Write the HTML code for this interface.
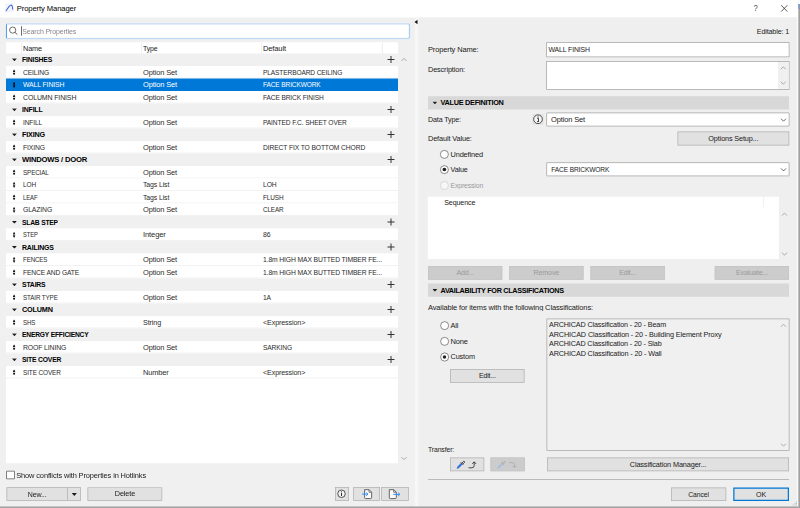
<!DOCTYPE html>
<html><head><meta charset="utf-8"><title>Property Manager</title>
<style>
*{box-sizing:border-box;margin:0;padding:0}
html,body{width:800px;height:508px;overflow:hidden;background:#f0f0f0}
#root{position:absolute;left:0;top:0;width:3200px;height:2032px;overflow:hidden;transform-origin:0 0;transform:scale(0.25);font-family:"Liberation Sans",sans-serif;font-size:30px;color:#1a1a1a;line-height:1;letter-spacing:-0.52px}
.a{position:absolute}
.t{position:absolute;white-space:nowrap;line-height:40px;height:40px;margin-top:-2.2px}
.w{display:inline-block;transform-origin:0 50%}
.btn .w{transform-origin:50% 50%}
.btn .t{margin-top:0}
.w.wr{transform-origin:100% 50%}
.u{letter-spacing:0;display:inline-block;transform:scaleX(.89);transform-origin:0 50%}
.row .c3.u{transform:scaleX(.855)}
#title{left:0;top:0;width:3192.8px;height:70.4px;background:#fff}
#list{left:24px;top:170px;width:1568px;height:1682.8px;background:#fff}
.row{position:absolute;left:24px;width:1568px;height:50px}
.row.g{background:#f0f0f0}
.row.it{background:#fff;color:#2b2b2b;border-bottom:4px solid #f2f2f2}
.row.sel{background:#0078d7;color:#fff;border-bottom:none}
.row span,.row b{position:absolute;top:0.2px;line-height:50px;white-space:nowrap;transform-origin:0 50%}
.row b{letter-spacing:-0.8px;font-size:29.2px;color:#000;margin-top:-0.4px}
.c1{left:64.4px}.c2{left:548px}.c3{left:1028px}
.it .c1{left:68.4px}
.tri{position:absolute;left:23.2px;top:19.2px;width:20.8px;height:11.6px;background:#1c1c1c;clip-path:polygon(0 0,100% 0,50% 100%)}
.ud{position:absolute;left:26.4px;top:13.2px;width:12px;height:24.8px;background:#1c1c1c;clip-path:polygon(50% 0,100% 43%,0 43%,50% 0,50% 100%,0 57%,100% 57%,50% 100%)}
.sel .ud{background:#000}
.plus{left:1525.6px;top:10.4px !important;width:28px;height:28px}
.plus:before{content:"";position:absolute;left:12px;top:0;width:4px;height:28px;background:#333}
.plus:after{content:"";position:absolute;left:0;top:12px;width:28px;height:4px;background:#333}
.btn{position:absolute;background:#e1e1e1;border:3.2px solid #b2b2b2;text-align:center;white-space:nowrap}
.btn.dis{background:#cccccc;border-color:#c4c4c4;color:#9a9a9a}
.inp{position:absolute;background:#fff;border:3.2px solid #a3a3a3}
.bar{position:absolute;left:1712px;width:1444px;height:52.8px;background:#d8d8d8}
.bar b{position:absolute;left:50px;top:0;line-height:52px;font-size:28.8px;letter-spacing:-1.2px;color:#000;white-space:nowrap}
.bar .tri{left:17.2px;top:20.8px}
.radio{position:absolute;width:35.2px;height:35.2px;border-radius:50%;border:3px solid #666;background:#fff}
.radio.on:after{content:"";position:absolute;left:7.2px;top:7.2px;width:14.4px;height:14.4px;border-radius:50%;background:#222}
.radio.dis{border-color:#cdcdcd;background:#f7f7f7}
svg{position:absolute;overflow:visible}
</style></head><body><div id="root">
<div class="a" id="title"></div>
<svg style="left:0;top:0" width="80" height="68" viewBox="0 0 20 17"><rect x="5.3" y="3.6" width="8.4" height="8.6" rx="0.8" fill="#f2f4fa"/><path d="M6.1 10.7 L9.1 6.4 C10.1 5 11.5 4.7 12.1 5.9 C12.5 6.8 12.6 8 12.7 9.2" fill="none" stroke="#4668dc" stroke-width="1.05" stroke-linecap="round"/></svg>
<div class="t" style="left:67.2px;top:16.4px;font-size:30.8px;color:#000"><span class="w" style="transform:scaleX(0.997)">Property Manager</span></div>
<div class="t" style="left:3012.8px;top:14.4px;font-size:36px;color:#4a4a4a;transform:scaleX(.85)">?</div>
<svg style="left:3120px;top:18px" width="32" height="32" viewBox="0 0 8 8"><path d="M1.2 0.7 L7.4 7.1 M7.4 0.7 L1.2 7.1" stroke="#333" stroke-width="0.8" fill="none"/></svg>

<!-- search -->
<div class="a" style="left:24px;top:93.6px;width:1614.8px;height:61.6px;background:#fff;border:4.8px solid #86b9ec;border-left-color:#5a9fe6;border-right-color:#5a9fe6;border-radius:4.8px;box-shadow:0 0 0 2px #d5e6f7"></div>
<svg style="left:32px;top:100px" width="44" height="44" viewBox="0 0 11 11"><circle cx="4.7" cy="5.1" r="3.1" fill="none" stroke="#4a4a4a" stroke-width="0.8"/><path d="M6.9 7.3 L9.3 9.6" stroke="#4a4a4a" stroke-width="0.9"/></svg>
<div class="a" style="left:84.8px;top:104.8px;width:3.2px;height:38.4px;background:#3a3a3a"></div>
<div class="t" style="left:89.2px;top:107.6px;font-size:28.8px;color:#85858f"><span class="w" style="transform:scaleX(0.971)">Search Properties</span></div>

<!-- list -->
<div class="a" id="list"></div>
<div class="a" style="left:24px;top:170px;width:1568px;height:45.2px;background:#fff"></div>
<div class="a" style="left:85.2px;top:170px;width:2.8px;height:45.2px;background:#ececec"></div>
<div class="a" style="left:565.2px;top:170px;width:2.8px;height:45.2px;background:#ececec"></div>
<div class="a" style="left:1045.2px;top:170px;width:2.8px;height:45.2px;background:#ececec"></div>
<div class="a" style="left:1527.2px;top:170px;width:4.8px;height:45.2px;background:#f0f0f0"></div>
<div class="t" style="left:92px;top:174.8px"><span class="w" style="transform:scaleX(0.974)">Name</span></div>
<div class="t" style="left:572px;top:174.8px"><span class="w" style="transform:scaleX(0.921)">Type</span></div>
<div class="t" style="left:1052px;top:174.8px"><span class="w" style="transform:scaleX(1.002)">Default</span></div>
<div class="row g" style="top:214px"><i class="tri"></i><b class="c1" style="transform:scaleX(0.936)">FINISHES</b><span class="plus"></span></div>
<div class="row it" style="top:264px"><i class="ud"></i><span class="c1" style="transform:scaleX(0.893)">CEILING</span><span class="c2" style="transform:scaleX(0.996)">Option Set</span><span class="c3" style="transform:scaleX(0.876)">PLASTERBOARD CEILING</span></div>
<div class="row it sel" style="top:314px"><i class="ud"></i><span class="c1" style="transform:scaleX(0.916)">WALL FINISH</span><span class="c2" style="transform:scaleX(0.996)">Option Set</span><span class="c3" style="transform:scaleX(0.871)">FACE BRICKWORK</span></div>
<div class="row it" style="top:364px"><i class="ud"></i><span class="c1" style="transform:scaleX(0.927)">COLUMN FINISH</span><span class="c2" style="transform:scaleX(0.996)">Option Set</span><span class="c3" style="transform:scaleX(0.877)">FACE BRICK FINISH</span></div>
<div class="row g" style="top:414px"><i class="tri"></i><b class="c1" style="transform:scaleX(0.953)">INFILL</b><span class="plus"></span></div>
<div class="row it" style="top:464px"><i class="ud"></i><span class="c1" style="transform:scaleX(0.879)">INFILL</span><span class="c2" style="transform:scaleX(0.996)">Option Set</span><span class="c3" style="transform:scaleX(0.884)">PAINTED F.C. SHEET OVER</span></div>
<div class="row g" style="top:514px"><i class="tri"></i><b class="c1" style="transform:scaleX(0.990)">FIXING</b><span class="plus"></span></div>
<div class="row it" style="top:564px"><i class="ud"></i><span class="c1" style="transform:scaleX(0.904)">FIXING</span><span class="c2" style="transform:scaleX(0.996)">Option Set</span><span class="c3" style="transform:scaleX(0.896)">DIRECT FIX TO BOTTOM CHORD</span></div>
<div class="row g" style="top:614px"><i class="tri"></i><b class="c1" style="transform:scaleX(1.047)">WINDOWS / DOOR</b><span class="plus"></span></div>
<div class="row it" style="top:664px"><i class="ud"></i><span class="c1" style="transform:scaleX(0.835)">SPECIAL</span><span class="c2" style="transform:scaleX(0.996)">Option Set</span></div>
<div class="row it" style="top:714px"><i class="ud"></i><span class="c1" style="transform:scaleX(0.865)">LOH</span><span class="c2" style="transform:scaleX(0.923)">Tags List</span><span class="c3" style="transform:scaleX(0.898)">LOH</span></div>
<div class="row it" style="top:764px"><i class="ud"></i><span class="c1" style="transform:scaleX(0.795)">LEAF</span><span class="c2" style="transform:scaleX(0.923)">Tags List</span><span class="c3" style="transform:scaleX(0.856)">FLUSH</span></div>
<div class="row it" style="top:814px"><i class="ud"></i><span class="c1" style="transform:scaleX(0.909)">GLAZING</span><span class="c2" style="transform:scaleX(0.996)">Option Set</span><span class="c3" style="transform:scaleX(0.842)">CLEAR</span></div>
<div class="row g" style="top:864px"><i class="tri"></i><b class="c1" style="transform:scaleX(0.917)">SLAB STEP</b><span class="plus"></span></div>
<div class="row it" style="top:914px"><i class="ud"></i><span class="c1" style="transform:scaleX(0.771)">STEP</span><span class="c2" style="transform:scaleX(1.013)">Integer</span><span class="c3" style="transform:scaleX(0.914)">86</span></div>
<div class="row g" style="top:964px"><i class="tri"></i><b class="c1" style="transform:scaleX(0.953)">RAILINGS</b><span class="plus"></span></div>
<div class="row it" style="top:1014px"><i class="ud"></i><span class="c1" style="transform:scaleX(0.819)">FENCES</span><span class="c2" style="transform:scaleX(0.996)">Option Set</span><span class="c3" style="transform:scaleX(0.902)">1.8m HIGH MAX BUTTED TIMBER FE...</span></div>
<div class="row it" style="top:1064px"><i class="ud"></i><span class="c1" style="transform:scaleX(0.891)">FENCE AND GATE</span><span class="c2" style="transform:scaleX(0.996)">Option Set</span><span class="c3" style="transform:scaleX(0.902)">1.8m HIGH MAX BUTTED TIMBER FE...</span></div>
<div class="row g" style="top:1114px"><i class="tri"></i><b class="c1" style="transform:scaleX(0.939)">STAIRS</b><span class="plus"></span></div>
<div class="row it" style="top:1164px"><i class="ud"></i><span class="c1" style="transform:scaleX(0.831)">STAIR TYPE</span><span class="c2" style="transform:scaleX(0.996)">Option Set</span><span class="c3" style="transform:scaleX(0.897)">1A</span></div>
<div class="row g" style="top:1214px"><i class="tri"></i><b class="c1" style="transform:scaleX(0.996)">COLUMN</b><span class="plus"></span></div>
<div class="row it" style="top:1264px"><i class="ud"></i><span class="c1" style="transform:scaleX(0.812)">SHS</span><span class="c2" style="transform:scaleX(0.957)">String</span><span class="c3" style="transform:scaleX(0.952)">&lt;Expression&gt;</span></div>
<div class="row g" style="top:1314px"><i class="tri"></i><b class="c1" style="transform:scaleX(0.915)">ENERGY EFFICIENCY</b><span class="plus"></span></div>
<div class="row it" style="top:1364px"><i class="ud"></i><span class="c1" style="transform:scaleX(0.913)">ROOF LINING</span><span class="c2" style="transform:scaleX(0.996)">Option Set</span><span class="c3" style="transform:scaleX(0.883)">SARKING</span></div>
<div class="row g" style="top:1414px"><i class="tri"></i><b class="c1" style="transform:scaleX(0.929)">SITE COVER</b><span class="plus"></span></div>
<div class="row it" style="top:1464px"><i class="ud"></i><span class="c1" style="transform:scaleX(0.857)">SITE COVER</span><span class="c2" style="transform:scaleX(0.992)">Number</span><span class="c3" style="transform:scaleX(0.952)">&lt;Expression&gt;</span></div>
<!-- list scrollbar -->
<svg style="left:1602px;top:228px" width="28" height="20" viewBox="0 0 7 5"><path d="M0.9 4 L3.5 1.3 L6.1 4" fill="none" stroke="#a3a3a3" stroke-width="0.9"/></svg>
<svg style="left:1602px;top:1824.4px" width="28" height="20" viewBox="0 0 7 5"><path d="M0.9 1 L3.5 3.7 L6.1 1" fill="none" stroke="#a3a3a3" stroke-width="0.9"/></svg>

<!-- bottom-left -->
<div class="a" style="left:25.2px;top:1882.8px;width:34px;height:34.4px;background:#fff;border:3px solid #5a5a5a;border-radius:2.8px"></div>
<div class="t" style="left:65.2px;top:1883.6px"><span class="w" style="transform:scaleX(0.992)">Show conflicts with Properties in Hotlinks</span></div>
<div class="btn" style="left:26px;top:1949.2px;width:298px;height:54px"></div>
<div class="a" style="left:269.2px;top:1953.2px;width:2.8px;height:46px;background:#adadad"></div>
<div class="t" style="left:29.2px;top:1958.4px;width:244px;text-align:center"><span class="w" style="transform:scaleX(0.932)">New...</span></div>
<i class="tri" style="left:286.8px;top:1972px"></i>
<div class="btn" style="left:350px;top:1949.2px;width:298.8px;height:54px"><div class="t" style="left:0;right:0;top:2.8px"><span class="w" style="transform:scaleX(0.971)">Delete</span></div></div>
<div class="btn" style="left:1340.4px;top:1948.4px;width:55.2px;height:54.8px"></div>
<svg style="left:1346.4px;top:1954.8px" width="40" height="40" viewBox="0 0 10 10"><circle cx="5" cy="5" r="3.75" fill="#f4f4f4" stroke="#3a3a3a" stroke-width="0.85"/><rect x="4.5" y="4.3" width="1" height="2.9" fill="#2a2a2a"/><rect x="4.5" y="2.6" width="1" height="1" fill="#2a2a2a"/></svg>
<div class="btn" style="left:1412.8px;top:1948.4px;width:106.8px;height:54.8px"></div>
<svg style="left:1440px;top:1952px" width="56" height="48" viewBox="0 0 14 12"><path d="M4.6 1.7 H9.1 L11.6 4.2 V9.6 Q11.6 10.6 10.6 10.6 H5.6 Q4.6 10.6 4.6 9.6 Z" fill="#fafafa" stroke="#4a4a4a" stroke-width="0.85" stroke-linejoin="round"/><path d="M9 1.9 V4.3 H11.4" fill="none" stroke="#4a4a4a" stroke-width="0.7"/><path d="M2 6.1 H8 M6.2 4.4 L8 6.1 L6.2 7.8" fill="none" stroke="#2f8cf0" stroke-width="0.95"/></svg>
<div class="btn" style="left:1524.8px;top:1948.4px;width:110.4px;height:54.8px"></div>
<svg style="left:1548px;top:1952px" width="60" height="48" viewBox="0 0 15 12"><path d="M2.3 1.7 H6.8 L9.3 4.2 V9.6 Q9.3 10.6 8.3 10.6 H3.3 Q2.3 10.6 2.3 9.6 Z" fill="#fafafa" stroke="#4a4a4a" stroke-width="0.85" stroke-linejoin="round"/><path d="M6.7 1.9 V4.3 H9.1" fill="none" stroke="#4a4a4a" stroke-width="0.7"/><path d="M6.2 6.4 H12.9 M11.1 4.7 L12.9 6.4 L11.1 8.1" fill="none" stroke="#2f8cf0" stroke-width="0.95"/></svg>

<!-- splitter -->
<div class="a" style="left:1660px;top:70px;width:14.4px;height:1956px;background:#f7f7f7"></div>
<div class="a" style="left:1674.4px;top:70px;width:1512.8px;height:1956px;background:#efefef"></div>
<div class="a" style="left:3187.2px;top:70px;width:5.6px;height:1956px;background:#f8f8f8"></div>
<div class="a" style="left:1658.4px;top:79.2px;width:0;height:0;border-top:9.6px solid transparent;border-bottom:9.6px solid transparent;border-right:12px solid #111"></div>

<!-- right panel -->
<div class="t" style="left:2756px;width:400px;text-align:right;top:108.8px"><span class="w wr" style="transform:scaleX(0.948)">Editable: 1</span></div>
<div class="t" style="left:1712px;top:180.8px"><span class="w" style="transform:scaleX(0.996)">Property Name:</span></div>
<div class="inp" style="left:2184.8px;top:168.8px;width:973.6px;height:60px"></div>
<div class="t" style="left:2194.4px;top:180.8px"><span class="w" style="transform:scaleX(0.918)">WALL FINISH</span></div>
<div class="t" style="left:1712px;top:259.2px"><span class="w" style="transform:scaleX(0.972)">Description:</span></div>
<div class="inp" style="left:2184.8px;top:244.4px;width:973.6px;height:114.4px"></div>
<div class="a" style="left:3112px;top:248px;width:42px;height:106.8px;background:#f0f0f0"></div>
<svg style="left:3121.2px;top:264px" width="24" height="16" viewBox="0 0 6 4"><path d="M0.5 3.3 L3 0.8 L5.5 3.3" fill="none" stroke="#a3a3a3" stroke-width="0.9"/></svg>
<svg style="left:3121.2px;top:324px" width="24" height="16" viewBox="0 0 6 4"><path d="M0.5 0.7 L3 3.2 L5.5 0.7" fill="none" stroke="#a3a3a3" stroke-width="0.9"/></svg>

<div class="bar" style="top:384.8px"><i class="tri"></i><b><span class="w" style="transform:scaleX(1.020)">VALUE DEFINITION</span></b></div>
<div class="t" style="left:1712px;top:461.2px"><span class="w" style="transform:scaleX(0.944)">Data Type:</span></div>
<div class="a" style="left:2129.6px;top:455.6px;width:44px;height:42.4px;background:#e2e2e2"></div>
<svg style="left:2132px;top:457.2px" width="40" height="40" viewBox="0 0 10 10"><circle cx="5" cy="5" r="4.35" fill="#f6f6f6" stroke="#3c3c3c" stroke-width="0.9"/><path d="M4.2 4.2 H5.5 V7.3 M4.1 7.3 H5.9" fill="none" stroke="#2a2a2a" stroke-width="0.9"/><rect x="4.5" y="2.2" width="1.1" height="1.1" fill="#2a2a2a"/></svg>
<div class="inp" style="left:2185.2px;top:450.4px;width:973.2px;height:55.2px;border-radius:3.2px"></div>
<div class="t" style="left:2204px;top:459.2px"><span class="w" style="transform:scaleX(0.996)">Option Set</span></div>
<svg style="left:3122.4px;top:472px" width="24" height="16" viewBox="0 0 6 4"><path d="M0.5 0.7 L3 3.2 L5.5 0.7" fill="none" stroke="#444" stroke-width="0.8"/></svg>

<div class="t" style="left:1712px;top:537.2px"><span class="w" style="transform:scaleX(0.978)">Default Value:</span></div>
<div class="btn" style="left:2710px;top:526.4px;width:447.2px;height:55.6px"><div class="t" style="left:0;right:0;top:3.6px"><span class="w" style="transform:scaleX(0.967)">Options Setup...</span></div></div>

<div class="radio" style="left:1760px;top:600px"></div>
<div class="t" style="left:1802.4px;top:598.4px"><span class="w" style="transform:scaleX(0.981)">Undefined</span></div>
<div class="radio on" style="left:1760px;top:660.8px"></div>
<div class="t" style="left:1802.4px;top:659.6px"><span class="w" style="transform:scaleX(0.956)">Value</span></div>
<div class="inp" style="left:2185.2px;top:648.8px;width:973.2px;height:56.4px;border-radius:3.2px"></div>
<div class="t" style="left:2205.2px;top:658.8px"><span class="w" style="transform:scaleX(0.877)">FACE BRICKWORK</span></div>
<svg style="left:3122.4px;top:671.2px" width="24" height="16" viewBox="0 0 6 4"><path d="M0.5 0.7 L3 3.2 L5.5 0.7" fill="none" stroke="#444" stroke-width="0.8"/></svg>
<div class="radio dis" style="left:1760px;top:724.4px"></div>
<div class="t" style="left:1802.4px;top:722px;color:#9a9a9a"><span class="w" style="transform:scaleX(0.910)">Expression</span></div>

<div class="a" style="left:1710.8px;top:786.8px;width:1405.2px;height:248.8px;background:#fff"></div>
<div class="a" style="left:3053.2px;top:785.2px;width:2.8px;height:44px;background:#ececec"></div>
<div class="t" style="left:1777.2px;top:792px"><span class="w" style="transform:scaleX(0.947)">Sequence</span></div>
<svg style="left:3125.6px;top:848.8px" width="24" height="16" viewBox="0 0 6 4"><path d="M0.5 3.3 L3 0.8 L5.5 3.3" fill="none" stroke="#a3a3a3" stroke-width="0.9"/></svg>
<svg style="left:3125.6px;top:1008px" width="24" height="16" viewBox="0 0 6 4"><path d="M0.5 0.7 L3 3.2 L5.5 0.7" fill="none" stroke="#a3a3a3" stroke-width="0.9"/></svg>

<div class="btn dis" style="left:1712px;top:1064px;width:297.2px;height:54.8px"><div class="t" style="left:0;right:0;top:3.6px"><span class="w" style="transform:scaleX(0.929)">Add...</span></div></div>
<div class="btn dis" style="left:2037.2px;top:1064px;width:297.2px;height:54.8px"><div class="t" style="left:0;right:0;top:3.6px"><span class="w" style="transform:scaleX(0.939)">Remove</span></div></div>
<div class="btn dis" style="left:2362px;top:1064px;width:297.2px;height:54.8px"><div class="t" style="left:0;right:0;top:3.6px"><span class="w" style="transform:scaleX(0.931)">Edit...</span></div></div>
<div class="btn dis" style="left:2859.2px;top:1064px;width:297.2px;height:54.8px"><div class="t" style="left:0;right:0;top:3.6px"><span class="w" style="transform:scaleX(0.941)">Evaluate...</span></div></div>

<div class="bar" style="top:1134.4px"><i class="tri"></i><b><span class="w" style="transform:scaleX(1.005)">AVAILABILITY FOR CLASSIFICATIONS</span></b></div>
<div class="t" style="left:1712px;top:1210.4px"><span class="w" style="transform:scaleX(0.998)">Available for items with the following Classifications:</span></div>
<div class="a" style="left:2186px;top:1274px;width:972px;height:528.8px;background:#f0f0f0;border:3.6px solid #a8a8a8"></div>
<div class="t" style="left:2196px;top:1280.8px"><span class="w" style="transform:scaleX(0.958)">ARCHICAD Classification - 20 - Beam</span></div>
<div class="t" style="left:2196px;top:1318.8px"><span class="w" style="transform:scaleX(0.970)">ARCHICAD Classification - 20 - Building Element Proxy</span></div>
<div class="t" style="left:2196px;top:1356.8px"><span class="w" style="transform:scaleX(0.957)">ARCHICAD Classification - 20 - Slab</span></div>
<div class="t" style="left:2196px;top:1394.8px"><span class="w" style="transform:scaleX(0.963)">ARCHICAD Classification - 20 - Wall</span></div>
<svg style="left:3122.4px;top:1294px" width="24" height="16" viewBox="0 0 6 4"><path d="M0.5 3.3 L3 0.8 L5.5 3.3" fill="none" stroke="#a3a3a3" stroke-width="0.9"/></svg>
<svg style="left:3122.4px;top:1772px" width="24" height="16" viewBox="0 0 6 4"><path d="M0.5 0.7 L3 3.2 L5.5 0.7" fill="none" stroke="#a3a3a3" stroke-width="0.9"/></svg>

<div class="radio" style="left:1760.8px;top:1284.8px"></div>
<div class="t" style="left:1802.4px;top:1284px"><span class="w" style="transform:scaleX(0.981)">All</span></div>
<div class="radio" style="left:1760.8px;top:1347.6px"></div>
<div class="t" style="left:1802.4px;top:1348px"><span class="w" style="transform:scaleX(0.999)">None</span></div>
<div class="radio on" style="left:1760.8px;top:1410.4px"></div>
<div class="t" style="left:1802.4px;top:1409.6px"><span class="w" style="transform:scaleX(0.974)">Custom</span></div>
<div class="btn" style="left:1800px;top:1476px;width:298.4px;height:54.8px"><div class="t" style="left:0;right:0;top:3.6px"><span class="w" style="transform:scaleX(0.931)">Edit...</span></div></div>

<div class="t" style="left:1712px;top:1778.8px"><span class="w" style="transform:scaleX(0.914)">Transfer:</span></div>
<div class="btn" style="left:1800px;top:1830.4px;width:136.8px;height:54.8px"></div>
<svg style="left:1824px;top:1838px" width="96" height="40" viewBox="0 0 24 10"><path d="M1 9 L1.6 7.2 L5.2 3.6 L6.4 4.8 L2.8 8.4 Z" fill="#2f6fd6" stroke="#2f6fd6" stroke-width="0.5"/><path d="M4.8 2.8 L7.2 5.2 M5.8 3.6 L7.6 1.8 A0.9 0.9 0 0 1 8.6 2.8 L6.8 4.6" fill="none" stroke="#333" stroke-width="0.9"/><path d="M12.5 8.3 H16 Q18.2 8.3 18.2 5.8 V2.5 M16.3 4.4 L18.2 2.3 L20.1 4.4" fill="none" stroke="#222" stroke-width="0.8"/></svg>
<div class="btn dis" style="left:1962px;top:1830.4px;width:136.8px;height:54.8px"></div>
<svg style="left:1986px;top:1838px" width="96" height="40" viewBox="0 0 24 10"><path d="M1 9 L1.6 7.2 L5.2 3.6 L6.4 4.8 L2.8 8.4 Z" fill="#a9bfe0" stroke="#a9bfe0" stroke-width="0.5"/><path d="M4.8 2.8 L7.2 5.2 M5.8 3.6 L7.6 1.8 A0.9 0.9 0 0 1 8.6 2.8 L6.8 4.6" fill="none" stroke="#aaa" stroke-width="0.9"/><path d="M12.5 3 H15.5 Q18 3 18 5.4 V8 M16.1 6.2 L18 8.3 L19.9 6.2" fill="none" stroke="#aaa" stroke-width="0.8"/></svg>
<div class="btn" style="left:2188px;top:1830.4px;width:968px;height:54.8px"><div class="t" style="left:0;right:0;top:3.6px"><span class="w" style="transform:scaleX(0.975)">Classification Manager...</span></div></div>
<div class="a" style="left:1712px;top:1916.8px;width:1444px;height:3.2px;background:#a8a8a8"></div>
<div class="btn" style="left:2684px;top:1949.6px;width:221.2px;height:54px"><div class="t" style="left:0;right:0;top:3.2px"><span class="w" style="transform:scaleX(0.908)">Cancel</span></div></div>
<div class="btn" style="left:2933.2px;top:1949.6px;width:222.8px;height:54px;border:5.6px solid #0078d7"><div class="t" style="left:0;right:0;top:1.6px"><span class="w" style="transform:scaleX(0.945)">OK</span></div></div>

<!-- window edges -->
<div class="a" style="left:3184px;top:2004.8px;width:4px;height:4px;background:#bdbdbd"></div><div class="a" style="left:3177.6px;top:2011.6px;width:4px;height:4px;background:#bdbdbd"></div><div class="a" style="left:3184px;top:2011.6px;width:4px;height:4px;background:#bdbdbd"></div><div class="a" style="left:3171.2px;top:2018.4px;width:4px;height:4px;background:#bdbdbd"></div><div class="a" style="left:3177.6px;top:2018.4px;width:4px;height:4px;background:#bdbdbd"></div><div class="a" style="left:3184px;top:2018.4px;width:4px;height:4px;background:#bdbdbd"></div>
<div class="a" style="left:0;top:2025.2px;width:3200px;height:6.8px;background:linear-gradient(#bdbdbd,#969696)"></div>
<div class="a" style="left:3192.8px;top:0;width:7.2px;height:2032px;background:linear-gradient(90deg,#b4b4b4,#989898)"></div>
<div class="a" style="left:3192.8px;top:0;width:7.2px;height:16px;background:#fff"></div>
<div class="a" style="left:3192.8px;top:16px;width:7.2px;height:20px;background:#7f9cc4"></div>
</div></body></html>
